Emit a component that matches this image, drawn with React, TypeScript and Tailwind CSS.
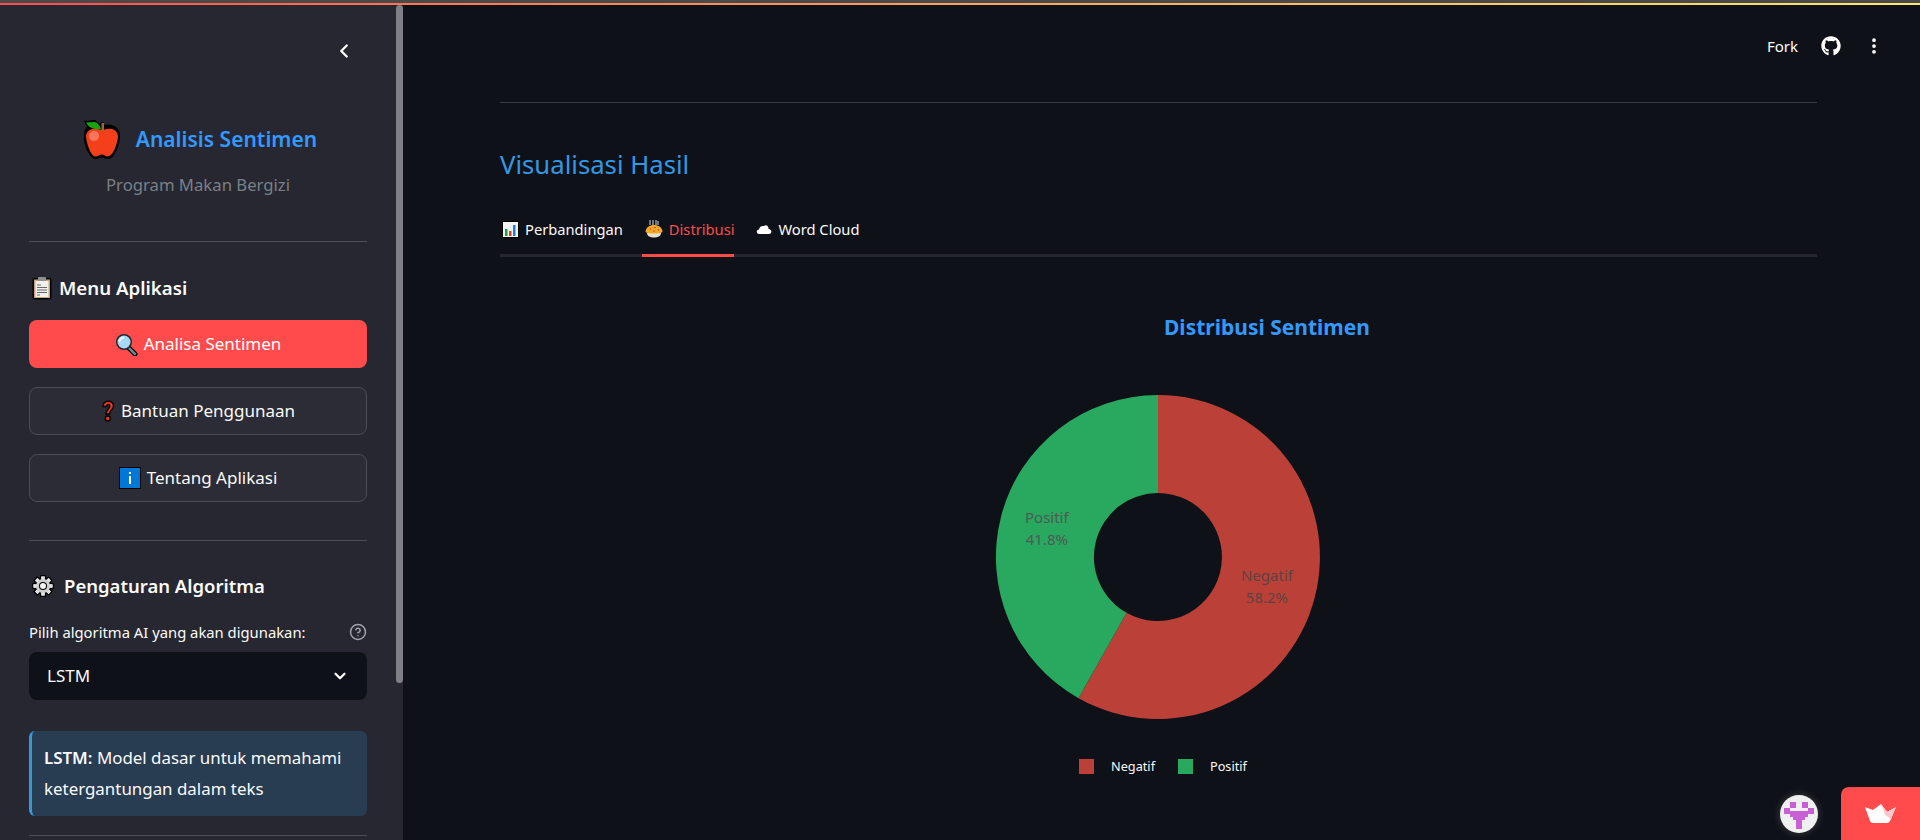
import type { ReactNode } from 'react'
import { ChevronLeft, ChevronDown, CircleHelp, EllipsisVertical } from 'lucide-react'
import { FaGithub } from 'react-icons/fa'

const FONT = '"Noto Sans", "Liberation Sans", sans-serif'

function AppleIcon() {
  return (
    <svg width="38" height="40" viewBox="0 0 38 40">
      <path d="M1 1 L12 0 L17 4 L18 2 L21 2 L21 5 C27 3 37 6 37 15 C37 24 32 38 26 39 C23 39.500 21 37.500 19 37.500 C17 37.500 15 39.500 12 39 C6 38 0 24 1 15 C1 11 2 9 4 7 Z" fill="#000" />
      <path d="M3 17 C3 10 9 8 14 9 C17 10 21 10 24 9 C29 8 35 10 35 17 C34 25 30 36 25 36.500 C22 36.500 21 34.500 19 34.500 C17 34.500 15 36.500 12 36.500 C8 36 4 25 3 17 Z" fill="#f4401a" />
      <circle cx="11" cy="16" r="5" fill="#f7775e" />
      <path d="M3 2.500 L12 2 C15 3 17 6 18 9 C11 10 6 8 3 2.500 Z" fill="#19a30f" />
      <rect x="18.500" y="3" width="2.500" height="8" fill="#a5653a" />
    </svg>
  )
}

function ClipboardIcon() {
  return (
    <svg width="20" height="24" viewBox="0 0 20 24" className="ml-[3px]">
      <rect x="0.500" y="2" width="19" height="21.500" rx="2" fill="#000" />
      <rect x="2" y="3.500" width="16" height="18.500" fill="#c9a079" />
      <rect x="3.500" y="5" width="13" height="16" fill="#f0f0ee" />
      <rect x="6" y="1" width="8" height="4" rx="1" fill="#8f8f8f" />
      <path d="M5 9h4M5 11.500h10M5 14h10M5 16.500h10M5 19h3" stroke="#666" strokeWidth="1.100" />
    </svg>
  )
}

function MagnifierIcon() {
  return (
    <svg width="23" height="23" viewBox="0 0 23 23">
      <path d="M13 14 L20 21" stroke="#000" strokeWidth="5" strokeLinecap="round" />
      <path d="M14 15 L20 21" stroke="#6d8790" strokeWidth="2.500" strokeLinecap="round" />
      <circle cx="9" cy="9" r="8" fill="#1d2a30" />
      <circle cx="9" cy="9" r="6.500" fill="#a8d8f5" />
      <path d="M4.500 9 A4.500 4.500 0 0 1 9 4.500" stroke="#e8f6ff" strokeWidth="2" fill="none" />
    </svg>
  )
}

function QuestionIcon() {
  return (
    <svg width="14" height="22" viewBox="0 0 14 22">
      <path d="M2 6.500 C2 -0.500 12.500 -0.500 12.500 6 C12.500 10 8.500 10 8.500 14 H5 C5 9 9 9 8.800 6 C8.500 3.800 5.500 4 5.500 6.500 Z" fill="#f13c12" stroke="#000" strokeWidth="1.500" />
      <circle cx="6.800" cy="18.500" r="2.500" fill="#f13c12" stroke="#000" strokeWidth="1.500" />
    </svg>
  )
}

function InfoIcon() {
  return (
    <svg width="22" height="22" viewBox="0 0 22 22">
      <rect x="0.500" y="0.500" width="21" height="21" fill="#0078d7" stroke="#000" />
      <rect x="10" y="5" width="2" height="2" fill="#fff" />
      <rect x="10" y="9" width="2" height="8" fill="#fff" />
    </svg>
  )
}

function GearIcon() {
  const teeth = [0, 45, 90, 135, 180, 225, 270, 315]
  return (
    <svg width="22" height="22" viewBox="0 0 22 22" className="ml-[3px]">
      {teeth.map((deg) => (
        <rect key={deg} x="8" y="0" width="6" height="22" rx="1.500" fill="#000" transform={`rotate(${deg} 11 11)`} />
      ))}
      <circle cx="11" cy="11" r="8.500" fill="#000" />
      {teeth.map((deg) => (
        <rect key={deg} x="9.300" y="1.500" width="3.400" height="19" fill="#e4e4e4" transform={`rotate(${deg} 11 11)`} />
      ))}
      <circle cx="11" cy="11" r="7" fill="#cfcfcf" />
      <circle cx="11" cy="11" r="4" fill="#000" />
      <circle cx="11" cy="11" r="3" fill="#f5f5f5" />
    </svg>
  )
}

function ChartIcon() {
  return (
    <svg width="17" height="17" viewBox="0 0 17 17" className="ml-[2px]">
      <rect x="0.500" y="0.500" width="16" height="16" fill="#f4f4f4" stroke="#000" />
      <rect x="3" y="8" width="2.500" height="7" fill="#16a34a" />
      <rect x="7" y="10" width="2.500" height="5" fill="#ea3a1a" />
      <rect x="11" y="4" width="2.500" height="11" fill="#1d7fd6" />
    </svg>
  )
}

function PieIcon() {
  return (
    <svg width="18" height="18" viewBox="0 0 18 18" className="ml-[3px]">
      <path d="M5 0v5M8 0v5M11 0v5M13 1v4" stroke="#d8d8d8" strokeWidth="1" />
      <path d="M2 13 H16 C16 16 13 17.500 9 17.500 C5 17.500 2 16 2 13 Z" fill="#e6e0d0" />
      <path d="M0.500 12 C0.500 2.500 17.500 2.500 17.500 12 C15 14 3 14 0.500 12 Z" fill="#f1a92c" />
      <circle cx="5.500" cy="9" r="0.800" fill="#d9401a" />
      <circle cx="10" cy="7.500" r="0.800" fill="#d9401a" />
      <circle cx="9" cy="11" r="0.800" fill="#d9401a" />
      <circle cx="13.500" cy="10" r="0.800" fill="#d9401a" />
    </svg>
  )
}

function CloudIcon() {
  return (
    <svg width="16" height="10" viewBox="0 0 16 10" className="ml-[3px]">
      <path d="M3 10 C0 10 0 5.500 3 5.500 C3.500 2.500 6 1.500 8 2 C10 0 13 2 12.500 5 C16 5 16.500 10 13 10 Z" fill="#fff" />
    </svg>
  )
}

function SidebarButton({ active, icon, label }: { active?: boolean; icon: ReactNode; label: string }) {
  return (
    <button
      className={
        active
          ? 'h-12 w-full rounded-lg bg-[#ff4b4b] text-white flex items-center justify-center gap-[6px] text-[17px]'
          : 'h-12 w-full rounded-lg bg-[#2b2c36] border border-[#4b4c55] text-[#fafafa] flex items-center justify-center gap-[6px] text-[17px]'
      }
    >
      {icon}
      <span>{label}</span>
    </button>
  )
}

function Tab({ active, icon, label }: { active?: boolean; icon: ReactNode; label: string }) {
  return (
    <div className={active ? 'h-[48px] pb-[2px] flex items-center gap-[6px] text-[#ff4b4b] relative' : 'h-[48px] pb-[2px] flex items-center gap-[6px] text-[#fafafa] relative'}>
      {icon}
      <span className="text-[14.700px]">{label}</span>
      {active && <div className="absolute left-0 right-0 -bottom-[3px] h-[3px] bg-[#ff4b4b]" />}
    </div>
  )
}

function DonutChart() {
  return (
    <svg width="326" height="326" viewBox="-163 -163 326 326">
      <path d="M0 -162 A162 162 0 1 1 -79.500 141.200 L-31.400 55.800 A64 64 0 1 0 0 -64 Z" fill="#bb4138" />
      <path d="M0 -162 A162 162 0 0 0 -79.500 141.200 L-31.400 55.800 A64 64 0 0 1 0 -64 Z" fill="#29a85f" />
    </svg>
  )
}

export default function App() {
  return (
    <div className="h-[840px] w-[1920px] overflow-hidden flex flex-col bg-[#0e1117] text-[#fafafa]" style={{ fontFamily: FONT }}>
      {/* top strip */}
      <div className="h-[3px] bg-[#4a4a4a]" />
      <div className="h-[2px] bg-gradient-to-r from-[#ff4b4b] to-[#ffe96b]" />

      <div className="flex flex-1 min-h-0">
        {/* Sidebar */}
        <aside className="w-[403px] shrink-0 bg-[#262730] relative overflow-hidden pl-[29px] pr-[36px]">
          <div className="absolute right-0 top-0 w-[7px] h-[678px] rounded-full bg-[#7f7f85]" />
          <div className="flex justify-end pr-[12px] pt-[35px]">
            <ChevronLeft size={22} strokeWidth={2.500} className="text-white" />
          </div>
          <div className="flex items-center justify-center gap-[15px] mt-[58px] h-[40px] ml-[4px]">
            <AppleIcon />
            <span className="text-[#3399ff] text-[21px] font-semibold">Analisis Sentimen</span>
          </div>
          <div className="text-center text-[#7a8088] text-[16.700px] mt-[12px]">Program Makan Bergizi</div>
          <hr className="border-[#4d4e57] mt-[44px]" />

          <div className="flex items-center gap-[7px] mt-[33px] h-[26px]">
            <ClipboardIcon />
            <span className="text-[18.700px] font-semibold">Menu Aplikasi</span>
          </div>
          <div className="flex flex-col gap-[19px] mt-[19px]">
            <SidebarButton active icon={<MagnifierIcon />} label="Analisa Sentimen" />
            <SidebarButton icon={<QuestionIcon />} label="Bantuan Penggunaan" />
            <SidebarButton icon={<InfoIcon />} label="Tentang Aplikasi" />
          </div>
          <hr className="border-[#4d4e57] mt-[38px]" />

          <div className="flex items-center gap-[10px] mt-[32px] h-[26px]">
            <GearIcon />
            <span className="text-[18.500px] font-semibold">Pengaturan Algoritma</span>
          </div>
          <div className="flex items-center justify-between mt-[23px] h-[20px]">
            <span className="text-[14.800px] leading-[20px]">Pilih algoritma AI yang akan digunakan:</span>
            <CircleHelp size={18} className="text-[#a3a4a9]" />
          </div>
          <div className="mt-[10px] h-12 rounded-lg bg-[#0e1117] flex items-center justify-between px-[18px]">
            <span className="text-[17px]">LSTM</span>
            <ChevronDown size={18} strokeWidth={3} className="text-white" />
          </div>
          <div className="mt-[31px] h-[85px] rounded-md bg-[#283d52] border-l-[3px] border-[#3498db] pl-[12px] pr-2 pt-[11px] text-[16.900px] leading-[31px]">
            <b className="font-semibold">LSTM:</b> Model dasar untuk memahami ketergantungan dalam teks
          </div>
          <hr className="border-[#4d4e57] mt-[19px]" />
        </aside>

        {/* Main */}
        <main className="flex-1 min-w-0 relative pl-[97px] pr-[103px]">
          <div className="flex items-center justify-end h-[82px] -mr-[103px] pr-[36px] gap-[23px] -mb-[3px]">
            <span className="text-[15px] text-white">Fork</span>
            <FaGithub size={20} className="text-white" />
            <EllipsisVertical size={20} strokeWidth={2.500} className="text-white" />
          </div>
          <hr className="border-[#3a3b42] mt-[18px]" />
          <h2 className="text-[#3399e6] text-[25.700px] mt-[43px] leading-[38px]">Visualisasi Hasil</h2>
          <div className="flex gap-[19px] mt-[22px] h-[48px] border-b-[3px] border-[#26272e] box-content">
            <Tab icon={<ChartIcon />} label="Perbandingan" />
            <Tab active icon={<PieIcon />} label="Distribusi" />
            <Tab icon={<CloudIcon />} label="Word Cloud" />
          </div>
          <div className="flex flex-col items-center">
            <h3 className="text-[#3399ff] text-[21px] font-bold mt-[55px] leading-[30px] ml-[217px]">Distribusi Sentimen</h3>
            <div className="relative mt-[52px] -ml-[1px]">
              <DonutChart />
              <div className="absolute left-[30px] top-[112px] text-[15px] leading-[22px] text-[#4f5a55] text-center">Positif<br />41.8%</div>
              <div className="absolute left-[246px] top-[170px] text-[15px] leading-[22px] text-[#5c4340] text-center">Negatif<br />58.2%</div>
            </div>
            <div className="flex items-center mt-[37px] text-[12.700px] ml-[9px]">
              <div className="w-[15px] h-[15px] bg-[#bb4138]" />
              <span className="ml-[17px]">Negatif</span>
              <div className="w-[15px] h-[15px] bg-[#29a85f] ml-[23px]" />
              <span className="ml-[17px]">Positif</span>
            </div>
          </div>
        </main>
      </div>

      {/* Floating badges */}
      <div className="fixed right-0 bottom-0 w-[79px] h-[53px] bg-[#ff4b4b] rounded-tl-lg flex items-center justify-center">
        <svg width="32" height="20" viewBox="0 0 32 20">
          <path d="M0 3 L8 6 L16 0 L22 8 L31 3 L25 17 Q24 19 22 19 H8 Q6 19 5 17 Z" fill="#fff" />
          <path d="M16 0 L22 8 L31 3 L26 15 L20 11 Z" fill="#ffc7cc" />
        </svg>
      </div>
      <div className="fixed left-[1780px] top-[795px] w-[38px] h-[38px] rounded-full bg-[#f0f0f0] shadow-[0_0_8px_rgba(255,255,255,0.2)] flex items-center justify-center">
        <svg width="30" height="30" viewBox="0 0 10 10" fill="#c95fd6" shapeRendering="crispEdges">
          <path d="M2 1h2v2H2zM6 1h2v2H6zM0 3h2v2H0zM8 3h2v2H8zM2 4h6v2H2zM3 6h4v1H3zM4 6h2v4H4z" />
        </svg>
      </div>
    </div>
  )
}
